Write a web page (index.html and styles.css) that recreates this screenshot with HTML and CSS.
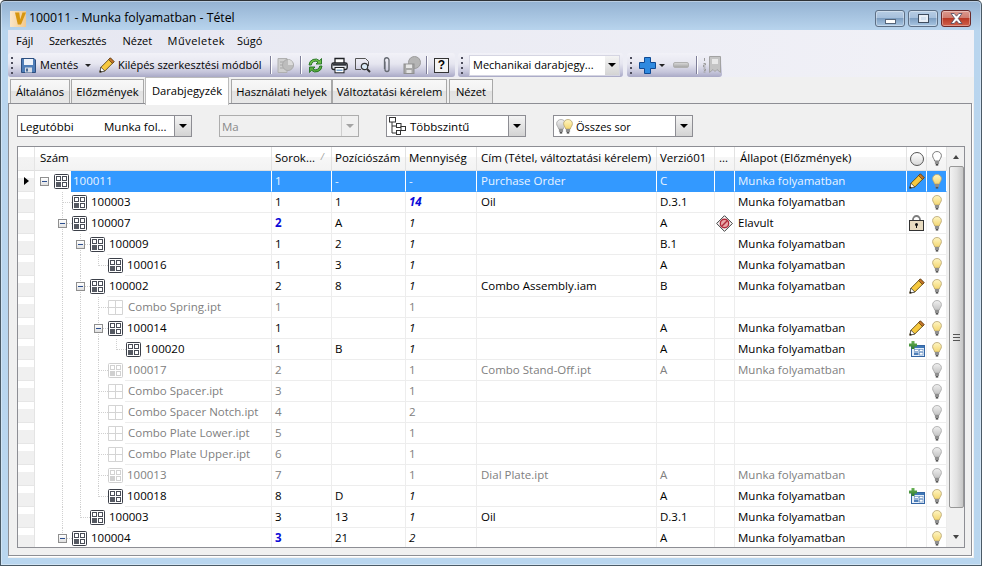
FILE: index.html
```html
<!DOCTYPE html>
<html lang="hu">
<head>
<meta charset="utf-8">
<title>100011 - Munka folyamatban - Tétel</title>
<link rel="stylesheet" href="styles.css">
</head>
<body>
<svg class="defs" width="0" height="0" aria-hidden="true">
  <defs>
    <linearGradient id="by" x1="0" y1="0" x2="0" y2="1"><stop offset="0" stop-color="#fff6c4"/><stop offset="1" stop-color="#f3d670"/></linearGradient>
    <linearGradient id="bg" x1="0" y1="0" x2="0" y2="1"><stop offset="0" stop-color="#f0f0f0"/><stop offset="1" stop-color="#c4c4c4"/></linearGradient>
    <linearGradient id="vl" x1="0" y1="0" x2="1" y2="0"><stop offset="0" stop-color="#fbe6c8"/><stop offset="1" stop-color="#f1c98e"/></linearGradient>
    <linearGradient id="gf" x1="0" y1="0" x2="0" y2="1"><stop offset="0" stop-color="#6cb558"/><stop offset="1" stop-color="#2d7a2a"/></linearGradient>
    <symbol id="asm" viewBox="0 0 15 15"><rect x=".5" y=".5" width="14" height="14" rx="1" fill="#fff" stroke="#3b3f48"/><rect x="2.500" y="2.500" width="4" height="4" fill="none" stroke="#4a4e58"/><rect x="8.500" y="2.500" width="4" height="4" fill="none" stroke="#4a4e58"/><rect x="2" y="8" width="5" height="5" fill="#555962"/><rect x="8.500" y="8.500" width="4" height="4" fill="none" stroke="#4a4e58"/></symbol>
    <symbol id="asml" viewBox="0 0 15 15"><rect x=".5" y=".5" width="14" height="14" rx="1" fill="#fff" stroke="#cfcfcf"/><rect x="2.500" y="2.500" width="4" height="4" fill="none" stroke="#d2d2d2"/><rect x="8.500" y="2.500" width="4" height="4" fill="none" stroke="#d2d2d2"/><rect x="2" y="8" width="5" height="5" fill="#d0d0d0"/><rect x="8.500" y="8.500" width="4" height="4" fill="none" stroke="#d2d2d2"/></symbol>
    <symbol id="part" viewBox="0 0 15 15"><path d="M.5.5h14v14H.5zM7.5.5v14M.5 7.5h14" fill="#fff" stroke="#d4d4d4"/></symbol>
    <symbol id="bulb" viewBox="0 0 12 18"><path d="M6 .6C3 .6.7 2.8.7 5.6c0 2.4 2 3.900 2.500 6.400h5.600c.5-2.500 2.500-4 2.500-6.400C11.300 2.800 9 .6 6 .6z" fill="url(#by)" stroke="#b8a673"/><rect x="3.500" y="12" width="5" height="3.500" fill="#8f8f8f"/><rect x="4.500" y="15.500" width="3" height="2" fill="#555"/></symbol>
    <symbol id="bulbg" viewBox="0 0 12 18"><path d="M6 .6C3 .6.7 2.8.7 5.6c0 2.4 2 3.900 2.500 6.400h5.600c.5-2.500 2.500-4 2.500-6.400C11.300 2.800 9 .6 6 .6z" fill="url(#bg)" stroke="#a8a8a8"/><rect x="3.500" y="12" width="5" height="3.500" fill="#8f8f8f"/><rect x="4.500" y="15.500" width="3" height="2" fill="#555"/></symbol>
    <symbol id="bulbo" viewBox="0 0 12 18"><path d="M6 .6C3 .6.7 2.8.7 5.6c0 2.4 2 3.900 2.500 6.400h5.600c.5-2.500 2.500-4 2.500-6.400C11.300 2.800 9 .6 6 .6z" fill="#fff" stroke="#666"/><rect x="3.500" y="12" width="5" height="3.500" fill="#8f8f8f"/><rect x="4.500" y="15.500" width="3" height="2" fill="#444"/></symbol>
    <symbol id="pencil" viewBox="0 0 16 16"><path d="M.8 15.200l1.200-5L11.200 1l3.800 3.800-9.200 9.200z" fill="#f7c93e" stroke="#5f4710" stroke-width=".9"/><path d="M9.600 2.600l3.800 3.800 1.800-1.800L11.400.8z" fill="#c5762a" stroke="#4f3310" stroke-width=".7"/><path d="M.8 15.200l1.200-5 3.800 3.800z" fill="#fff" stroke="#333" stroke-width=".7"/><path d="M.8 15.200l.5-2 1.500 1.500z" fill="#111"/></symbol>
    <symbol id="lock" viewBox="0 0 15 16"><path d="M4 7V4.500a3.500 3.500 0 0 1 7 0V7" fill="none" stroke="#7c7c7c" stroke-width="1.800"/><rect x=".5" y="5.500" width="14" height="10" fill="#e9dcc0" stroke="#333"/><circle cx="7.500" cy="9.500" r="1.500" fill="#111"/><rect x="7" y="9.500" width="1" height="3.500" fill="#111"/></symbol>
    <symbol id="stop" viewBox="0 0 17 17"><path d="M8.500.7l7.800 7.800-7.800 7.800L.7 8.500z" fill="#fff" stroke="#333"/><circle cx="8.500" cy="8.500" r="4.200" fill="#e9a8a8" stroke="#b02a3a" stroke-width="1.400"/><path d="M5.800 11.200l5.400-5.400" stroke="#b02a3a" stroke-width="1.400"/></symbol>
    <symbol id="newitem" viewBox="0 0 16 16"><rect x="2.500" y="4.500" width="13" height="11" fill="#e6effa" stroke="#3465a4"/><rect x="3" y="5" width="12" height="2" fill="#3f78b8"/><rect x="5.500" y="8.500" width="4" height="2" fill="#fff" stroke="#5a86bd" stroke-width=".6"/><rect x="10.500" y="8.500" width="3.500" height="2" fill="#fff" stroke="#5a86bd" stroke-width=".6"/><rect x="5" y="11.500" width="4.500" height="2.500" fill="#4f7fb8"/><rect x="10.500" y="11.500" width="3.500" height="2.500" fill="#fff" stroke="#5a86bd" stroke-width=".6"/><path d="M2.500 0h3v2.500H8v3H5.500V8h-3V5.500H0v-3h2.500z" fill="url(#gf)"/></symbol>
    <symbol id="save" viewBox="0 0 15 15"><path d="M.5.500h12.500l1.500 1.500v12.500H.5z" fill="#4f7eb8" stroke="#2d4f80"/><rect x="3" y="1" width="9" height="6" fill="#eef3fa"/><rect x="4" y="9.500" width="7" height="5" fill="#d7dde6"/><rect x="5" y="10.500" width="2" height="3" fill="#4a6a95"/></symbol>
    <symbol id="sync" viewBox="0 0 17 17"><path d="M2 8a6.300 6.300 0 0 1 10.600-4.300L14.500 1.500V7H9l2-2A4.200 4.200 0 0 0 4.300 8z" fill="#6fbf4a" stroke="#20701f" stroke-width=".9"/><path d="M15 9a6.300 6.300 0 0 1-10.600 4.300L2.500 15.500V10H8l-2 2a4.200 4.200 0 0 0 6.700-3z" fill="#5aad3e" stroke="#20701f" stroke-width=".9"/></symbol>
    <symbol id="print" viewBox="0 0 17 16"><path d="M4 6V1h9v5" fill="#fff" stroke="#1f2125" stroke-width="1.300"/><rect x=".8" y="5.500" width="15.400" height="6.500" rx="1.800" fill="#e3e6ec" stroke="#1f2125" stroke-width="1.300"/><rect x="1.500" y="6" width="14" height="2.200" fill="#33363c"/><rect x="4" y="10" width="9" height="5.300" fill="#fff" stroke="#1f2125"/><rect x="5.500" y="12" width="6" height="1.500" fill="#7ba6d2"/></symbol>
    <symbol id="preview" viewBox="0 0 16 16"><path d="M.5 1.500h10l3 3V9" fill="none" stroke="#555"/><path d="M.5 1.500V12.500H6" fill="none" stroke="#555"/><circle cx="9.500" cy="9.500" r="3.200" fill="#d8e8f5" stroke="#333" stroke-width="1.200"/><path d="M12 12l3 3" stroke="#333" stroke-width="2"/></symbol>
    <symbol id="clip" viewBox="0 0 8 16"><path d="M2 4.500v8a2 2 0 0 0 4 0V3a2.200 2.200 0 0 0-4.500 0v9" fill="none" stroke="#666a72" stroke-width="1.300"/></symbol>
    <symbol id="graysave" viewBox="0 0 18 18"><circle cx="11.500" cy="6.500" r="6" fill="#b5b5b5" stroke="#9c9c9c"/><rect x="1" y="8" width="10" height="9.500" fill="#a8a8a8" stroke="#8f8f8f"/><rect x="3" y="8.500" width="6" height="3.500" fill="#e8e8e8"/><rect x="3.500" y="14" width="5" height="3" fill="#e2e2e2"/></symbol>
    <symbol id="grayrep" viewBox="0 0 17 17"><path d="M1 1.500h9v14H1z" fill="#cfcfcf" stroke="#b0b0b0"/><path d="M3 5h5M3 8h5M3 11h5" stroke="#a5a5a5"/><circle cx="11" cy="8" r="5.500" fill="#bdbdbd" stroke="#aaa"/><path d="M11 8V2.500A5.500 5.500 0 0 1 16 8z" fill="#dcdcdc"/></symbol>
    <symbol id="plus" viewBox="0 0 17 17"><path d="M5.500.5h6v5h5v6h-5v5h-6v-5h-5v-6h5z" fill="#2f8ae0" stroke="#0f4a94"/></symbol>
    <symbol id="stack" viewBox="0 0 18 18"><path d="M6.500.5h11v16l-3.500-3-2 2-2-2-3.500 3z" fill="#c4c4c4" stroke="#a2a2a2"/><path d="M9 3h6v5H9z" fill="#e8e8e8"/><path d="M1.500 2v3M.5 7.500h2v1.500H.5v2h2M.5 13h2v1.500H1M.5 16h2" stroke="#9c9c9c" fill="none"/></symbol>
    <symbol id="multi" viewBox="0 0 17 18"><path d="M3 5v11h4M3 9h4" fill="none" stroke="#333"/><rect x=".5" y=".5" width="6" height="4.500" fill="#fff" stroke="#333"/><rect x="7.500" y="6.500" width="4.500" height="4" fill="#fff" stroke="#333"/><rect x="7.500" y="13.500" width="4" height="4" fill="#fff" stroke="#333"/><rect x="12" y="9.500" width="4.500" height="4" fill="#fff" stroke="#333"/></symbol>
    <symbol id="logo" viewBox="0 0 16 16"><rect width="16" height="16" fill="url(#vl)"/><path d="M5 1.500h4.200l1 7 2.300-7H16l-5 12H7.800z" fill="#d6960f"/></symbol>
  </defs>
</svg>

<div class="window">
  <header class="titlebar">
    <svg class="logo"><use href="#logo"/></svg>
    <span class="title">100011 - Munka folyamatban - Tétel</span>
    <div class="winbtns">
      <button class="wb"><span class="wb-min"></span></button>
      <button class="wb"><span class="wb-max"></span></button>
      <button class="wb wb-close"><svg width="13" height="11" viewBox="0 0 13 11"><path d="M1 .5h3.200l2.300 2.700L8.800.5H12L8.300 5.500 12 10.500H8.800L6.500 7.800 4.200 10.500H1l3.700-5z" fill="#fff" stroke="#4a4a60" stroke-width=".8"/></svg></button>
    </div>
  </header>

  <main class="client">
    <div class="bars">
      <nav class="menu">
        <span class="mi m1">Fájl</span><span class="mi m2">Szerkesztés</span><span class="mi m3">Nézet</span><span class="mi m4">Műveletek</span><span class="mi m5">Súgó</span>
      </nav>
      <div class="toolrow">
        <div class="strip s1">
          <i class="grip"></i>
          <svg class="ic15 i-save"><use href="#save"/></svg>
          <span class="tl l-ment">Mentés</span>
          <i class="caret c-ment"></i>
          <svg class="ic16 i-pen"><use href="#pencil"/></svg>
          <span class="tl l-kil">Kilépés szerkesztési módból</span>
          <i class="sep sp1"></i>
          <svg class="ic17 i-rep"><use href="#grayrep"/></svg>
          <i class="sep sp2"></i>
          <svg class="ic17 i-sync"><use href="#sync"/></svg>
          <svg class="ic17 i-print"><use href="#print"/></svg>
          <svg class="ic16 i-prev"><use href="#preview"/></svg>
          <svg class="clip"><use href="#clip"/></svg>
          <svg class="ic18 i-gs"><use href="#graysave"/></svg>
          <i class="sep sp3"></i>
          <span class="help">?</span>
        </div>
        <div class="strip s2">
          <i class="grip"></i>
          <div class="tcombo"><span class="tc-text">Mechanikai darabjegy...</span><span class="tc-btn"><i class="arrow"></i></span></div>
        </div>
        <div class="strip s3">
          <i class="grip"></i>
          <svg class="ic17 i-plus"><use href="#plus"/></svg>
          <i class="caret c-plus"></i>
          <i class="minus"></i>
          <i class="sep sp4"></i>
          <svg class="ic18 i-stack"><use href="#stack"/></svg>
        </div>
      </div>
    </div>

    <div class="tabs">
      <span class="tab t1">Általános</span>
      <span class="tab t2">Előzmények</span>
      <span class="tab active t3">Darabjegyzék</span>
      <span class="tab t4">Használati helyek</span>
      <span class="tab t5">Változtatási kérelem</span>
      <span class="tab t6">Nézet</span>
    </div>

    <section class="panel">
      <div class="filters">
        <div class="combo cb1"><span class="c-a">Legutóbbi</span><span class="c-b">Munka fol...</span><span class="cbtn"><i class="arrow"></i></span></div>
        <div class="combo cb2 off"><span class="c-t">Ma</span><span class="cbtn"><i class="arrow"></i></span></div>
        <div class="combo cb3"><svg class="cico"><use href="#multi"/></svg><span class="c-t2">Többszintű</span><span class="cbtn"><i class="arrow"></i></span></div>
        <div class="combo cb4"><svg class="cbulb cb-g"><use href="#bulbg"/></svg><svg class="cbulb cb-y"><use href="#bulb"/></svg><span class="c-t2 c-t4">Összes sor</span><span class="cbtn"><i class="arrow"></i></span></div>
      </div>

      <div class="grid">
        <div class="table">
          <div class="row head">
            <div class="rh"></div>
            <div class="h h-tree">Szám</div>
            <div class="h h-sort">Sorok...<em class="sorted">/</em></div>
            <div class="h">Pozíciószám</div>
            <div class="h">Mennyiség</div>
            <div class="h h-cim">Cím (Tétel, változtatási kérelem)</div>
            <div class="h">Verzió01</div>
            <div class="h h-dots">...</div>
            <div class="h h-all">Állapot (Előzmények)</div>
            <div class="h h-ic"><i class="circ"></i></div>
            <div class="h h-ic"><svg class="bulb"><use href="#bulbo"/></svg></div>
          </div>

          <div class="row sel">
            <div class="rh"><i class="cur"></i></div>
            <div class="tree"><span class="slot"><i class="exp"></i></span><svg class="node"><use href="#asm"/></svg><span class="name">100011</span></div>
            <div class="c">1</div><div class="c">-</div><div class="c">-</div><div class="c cim">Purchase Order</div><div class="c">C</div><div class="c"></div><div class="c">Munka folyamatban</div>
            <div class="c ic"><svg class="pen"><use href="#pencil"/></svg></div><div class="c ic"><svg class="bulb"><use href="#bulb"/></svg></div>
          </div>

          <div class="row">
            <div class="rh"></div>
            <div class="tree"><i class="g"></i><span class="slot tee"></span><svg class="node"><use href="#asm"/></svg><span class="name">100003</span></div>
            <div class="c">1</div><div class="c">1</div><div class="c qty">14</div><div class="c cim">Oil</div><div class="c">D.3.1</div><div class="c"></div><div class="c">Munka folyamatban</div>
            <div class="c ic"></div><div class="c ic"><svg class="bulb"><use href="#bulb"/></svg></div>
          </div>

          <div class="row">
            <div class="rh"></div>
            <div class="tree"><i class="g"></i><span class="slot tee"><i class="exp"></i></span><svg class="node"><use href="#asm"/></svg><span class="name">100007</span></div>
            <div class="c blue">2</div><div class="c">A</div><div class="c it">1</div><div class="c cim"></div><div class="c">A</div><div class="c ic"><svg class="stop"><use href="#stop"/></svg></div><div class="c">Elavult</div>
            <div class="c ic"><svg class="lock"><use href="#lock"/></svg></div><div class="c ic"><svg class="bulb"><use href="#bulb"/></svg></div>
          </div>

          <div class="row">
            <div class="rh"></div>
            <div class="tree"><i class="g"></i><i class="g v"></i><span class="slot tee"><i class="exp"></i></span><svg class="node"><use href="#asm"/></svg><span class="name">100009</span></div>
            <div class="c">1</div><div class="c">2</div><div class="c it">1</div><div class="c cim"></div><div class="c">B.1</div><div class="c"></div><div class="c">Munka folyamatban</div>
            <div class="c ic"></div><div class="c ic"><svg class="bulb"><use href="#bulb"/></svg></div>
          </div>

          <div class="row">
            <div class="rh"></div>
            <div class="tree"><i class="g"></i><i class="g v"></i><i class="g v"></i><span class="slot last"></span><svg class="node"><use href="#asm"/></svg><span class="name">100016</span></div>
            <div class="c">1</div><div class="c">3</div><div class="c it">1</div><div class="c cim"></div><div class="c">A</div><div class="c"></div><div class="c">Munka folyamatban</div>
            <div class="c ic"></div><div class="c ic"><svg class="bulb"><use href="#bulb"/></svg></div>
          </div>

          <div class="row">
            <div class="rh"></div>
            <div class="tree"><i class="g"></i><i class="g v"></i><span class="slot tee"><i class="exp"></i></span><svg class="node"><use href="#asm"/></svg><span class="name">100002</span></div>
            <div class="c">2</div><div class="c">8</div><div class="c it">1</div><div class="c cim">Combo Assembly.iam</div><div class="c">B</div><div class="c"></div><div class="c">Munka folyamatban</div>
            <div class="c ic"><svg class="pen"><use href="#pencil"/></svg></div><div class="c ic"><svg class="bulb"><use href="#bulb"/></svg></div>
          </div>

          <div class="row dim">
            <div class="rh"></div>
            <div class="tree"><i class="g"></i><i class="g v"></i><i class="g v"></i><span class="slot tee"></span><svg class="node"><use href="#part"/></svg><span class="name pt">Combo Spring.ipt</span></div>
            <div class="c">1</div><div class="c"></div><div class="c">1</div><div class="c cim"></div><div class="c"></div><div class="c"></div><div class="c"></div>
            <div class="c ic"></div><div class="c ic"><svg class="bulb"><use href="#bulbg"/></svg></div>
          </div>

          <div class="row">
            <div class="rh"></div>
            <div class="tree"><i class="g"></i><i class="g v"></i><i class="g v"></i><span class="slot tee"><i class="exp"></i></span><svg class="node"><use href="#asm"/></svg><span class="name">100014</span></div>
            <div class="c">1</div><div class="c"></div><div class="c it">1</div><div class="c cim"></div><div class="c">A</div><div class="c"></div><div class="c">Munka folyamatban</div>
            <div class="c ic"><svg class="pen"><use href="#pencil"/></svg></div><div class="c ic"><svg class="bulb"><use href="#bulb"/></svg></div>
          </div>

          <div class="row">
            <div class="rh"></div>
            <div class="tree"><i class="g"></i><i class="g v"></i><i class="g v"></i><i class="g v"></i><span class="slot last"></span><svg class="node"><use href="#asm"/></svg><span class="name">100020</span></div>
            <div class="c">1</div><div class="c">B</div><div class="c it">1</div><div class="c cim"></div><div class="c">A</div><div class="c"></div><div class="c">Munka folyamatban</div>
            <div class="c ic"><svg class="new"><use href="#newitem"/></svg></div><div class="c ic"><svg class="bulb"><use href="#bulb"/></svg></div>
          </div>

          <div class="row dim">
            <div class="rh"></div>
            <div class="tree"><i class="g"></i><i class="g v"></i><i class="g v"></i><span class="slot tee"></span><svg class="node"><use href="#asml"/></svg><span class="name">100017</span></div>
            <div class="c">2</div><div class="c"></div><div class="c">1</div><div class="c cim">Combo Stand-Off.ipt</div><div class="c">A</div><div class="c"></div><div class="c">Munka folyamatban</div>
            <div class="c ic"></div><div class="c ic"><svg class="bulb"><use href="#bulbg"/></svg></div>
          </div>

          <div class="row dim">
            <div class="rh"></div>
            <div class="tree"><i class="g"></i><i class="g v"></i><i class="g v"></i><span class="slot tee"></span><svg class="node"><use href="#part"/></svg><span class="name pt">Combo Spacer.ipt</span></div>
            <div class="c">3</div><div class="c"></div><div class="c">1</div><div class="c cim"></div><div class="c"></div><div class="c"></div><div class="c"></div>
            <div class="c ic"></div><div class="c ic"><svg class="bulb"><use href="#bulbg"/></svg></div>
          </div>

          <div class="row dim">
            <div class="rh"></div>
            <div class="tree"><i class="g"></i><i class="g v"></i><i class="g v"></i><span class="slot tee"></span><svg class="node"><use href="#part"/></svg><span class="name pt">Combo Spacer Notch.ipt</span></div>
            <div class="c">4</div><div class="c"></div><div class="c">2</div><div class="c cim"></div><div class="c"></div><div class="c"></div><div class="c"></div>
            <div class="c ic"></div><div class="c ic"><svg class="bulb"><use href="#bulbg"/></svg></div>
          </div>

          <div class="row dim">
            <div class="rh"></div>
            <div class="tree"><i class="g"></i><i class="g v"></i><i class="g v"></i><span class="slot tee"></span><svg class="node"><use href="#part"/></svg><span class="name pt">Combo Plate Lower.ipt</span></div>
            <div class="c">5</div><div class="c"></div><div class="c">1</div><div class="c cim"></div><div class="c"></div><div class="c"></div><div class="c"></div>
            <div class="c ic"></div><div class="c ic"><svg class="bulb"><use href="#bulbg"/></svg></div>
          </div>

          <div class="row dim">
            <div class="rh"></div>
            <div class="tree"><i class="g"></i><i class="g v"></i><i class="g v"></i><span class="slot tee"></span><svg class="node"><use href="#part"/></svg><span class="name pt">Combo Plate Upper.ipt</span></div>
            <div class="c">6</div><div class="c"></div><div class="c">1</div><div class="c cim"></div><div class="c"></div><div class="c"></div><div class="c"></div>
            <div class="c ic"></div><div class="c ic"><svg class="bulb"><use href="#bulbg"/></svg></div>
          </div>

          <div class="row dim">
            <div class="rh"></div>
            <div class="tree"><i class="g"></i><i class="g v"></i><i class="g v"></i><span class="slot tee"></span><svg class="node"><use href="#asml"/></svg><span class="name">100013</span></div>
            <div class="c">7</div><div class="c"></div><div class="c">1</div><div class="c cim">Dial Plate.ipt</div><div class="c">A</div><div class="c"></div><div class="c">Munka folyamatban</div>
            <div class="c ic"></div><div class="c ic"><svg class="bulb"><use href="#bulbg"/></svg></div>
          </div>

          <div class="row">
            <div class="rh"></div>
            <div class="tree"><i class="g"></i><i class="g v"></i><i class="g v"></i><span class="slot last"></span><svg class="node"><use href="#asm"/></svg><span class="name">100018</span></div>
            <div class="c">8</div><div class="c">D</div><div class="c it">1</div><div class="c cim"></div><div class="c">A</div><div class="c"></div><div class="c">Munka folyamatban</div>
            <div class="c ic"><svg class="new"><use href="#newitem"/></svg></div><div class="c ic"><svg class="bulb"><use href="#bulb"/></svg></div>
          </div>

          <div class="row">
            <div class="rh"></div>
            <div class="tree"><i class="g"></i><i class="g v"></i><span class="slot last"></span><svg class="node"><use href="#asm"/></svg><span class="name">100003</span></div>
            <div class="c">3</div><div class="c">13</div><div class="c it">1</div><div class="c cim">Oil</div><div class="c">D.3.1</div><div class="c"></div><div class="c">Munka folyamatban</div>
            <div class="c ic"></div><div class="c ic"><svg class="bulb"><use href="#bulb"/></svg></div>
          </div>

          <div class="row">
            <div class="rh"></div>
            <div class="tree"><i class="g"></i><span class="slot last"><i class="exp"></i></span><svg class="node"><use href="#asm"/></svg><span class="name">100004</span></div>
            <div class="c blue">3</div><div class="c">21</div><div class="c it">2</div><div class="c cim"></div><div class="c">A</div><div class="c"></div><div class="c">Munka folyamatban</div>
            <div class="c ic"></div><div class="c ic"><svg class="bulb"><use href="#bulb"/></svg></div>
          </div>
        </div>

        <div class="scroll">
          <span class="sb-btn"><i class="up"></i></span>
          <div class="thumb"><i class="gripper"></i></div>
          <span class="sb-btn sb-down"><i class="down"></i></span>
        </div>
      </div>
    </section>
  </main>
</div>
</body>
</html>
```

FILE: styles.css
```css
* { box-sizing: border-box; }
html, body { margin: 0; padding: 0; }
body {
  width: 982px; height: 566px; overflow: hidden; background: #fff;
  font-family: "Open Sans", "Noto Sans", sans-serif; font-size: 11.5px; color: #000;
}
.defs { position: absolute; }
i { display: block; font-style: normal; }

.window {
  width: 982px; height: 566px; display: flex; flex-direction: column;
  border: 1px solid #4a5a66; border-top-color: #2e3236; border-radius: 5px 5px 0 0;
  background: linear-gradient(#94b2d2 0, #b9d5ee 30px, #b9d6ef 100%);
  box-shadow: inset 0 0 0 1px rgba(255,255,255,.35);
}

/* title */
.titlebar { height: 29px; flex: none; display: flex; align-items: flex-start; }
.logo { width: 16px; height: 16px; margin: 10px 0 0 9px; flex: none; }
.title { margin: 8px 0 0 3px; font-size: 12.3px; line-height: 17px; }
.winbtns { margin: 9px 0 0 auto; padding-right: 10px; display: flex; gap: 3px; }
.wb {
  width: 30px; height: 17px; padding: 0; border: 1px solid #5d6f85; border-radius: 3px;
  background: linear-gradient(#b7cde4 0, #a6c0dc 45%, #7e9fc2 50%, #a9c6e2 100%);
  display: flex; align-items: center; justify-content: center;
  box-shadow: inset 0 0 0 1px rgba(255,255,255,.35);
}
.wb-min { width: 11px; height: 5px; margin-top: 5px; background: #fff; border: 1px solid #55657a; }
.wb-max { width: 11px; height: 9px; background: #d3e0ee; border: 1px solid #3e4c5e; box-shadow: inset 0 0 0 2px #e9eff6; }
.wb-close { background: linear-gradient(#dd9a8e 0, #cf7d70 45%, #b93a26 50%, #d0614c 100%); border-color: #6b2a2a; }

/* client */
.client { margin: 0 7px; height: 528px; flex: none; background: #f0f0f0; display: flex; flex-direction: column; }
.bars { height: 47px; flex: none; background: linear-gradient(90deg, #e6e7f1, #f1f1f7); }
.menu { height: 23px; display: flex; align-items: center; font-size: 11px; }
.mi { line-height: 21px; margin-top: -2px; flex: none; }
.m1 { margin-left: 8px; width: 33px; }
.m2 { width: 73.500px; letter-spacing: -.2px; }
.m3 { width: 45px; }
.m4 { width: 69.500px; letter-spacing: .5px; }

.toolrow { height: 24px; display: flex; font-size: 11px; }
.strip {
  height: 24px; display: flex; align-items: center; flex: none;
  background: linear-gradient(#f2f2f8 0, #e6e6f0 45%, #c4c4da 80%, #a9a9c6 100%);
  border-radius: 3px;
}
.s1 { width: 447px; }
.s2 { width: 165px; margin-left: 3px; }
.s3 { width: 95px; margin-left: 4px; }
.grip {
  width: 2px; height: 17px; margin-left: 3px; flex: none;
  background: repeating-linear-gradient(#4e4e5e 0, #4e4e5e 2px, transparent 2px, transparent 5px);
}
.caret { width: 0; height: 0; border: 3px solid transparent; border-top: 3px solid #222; border-bottom: 0; flex: none; }
.sep { width: 1px; height: 18px; background: #7e7e98; box-shadow: 1px 0 0 #fff; flex: none; }
.ic15 { width: 15px; height: 15px; flex: none; }
.ic16 { width: 16px; height: 16px; flex: none; }
.ic17 { width: 17px; height: 17px; flex: none; }
.ic18 { width: 18px; height: 18px; flex: none; }
.tl { white-space: nowrap; flex: none; margin-top: -2px; }
.i-save { margin-left: 8px; }
.l-ment { margin-left: 4px; width: 45px; }
.i-pen { margin-left: 8px; }
.l-kil { margin-left: 3px; width: 148px; }
.sp1 { margin-left: 4px; }
.i-rep { margin-left: 6px; }
.sp2 { margin-left: 6px; }
.i-sync { margin-left: 6px; }
.i-print { margin-left: 7px; }
.i-prev { margin-left: 7px; }
.clip { width: 8px; height: 16px; margin-left: 12px; flex: none; }
.i-gs { margin-left: 12px; }
.sp3 { margin-left: 5px; }
.help {
  width: 15px; height: 15px; margin-left: 7px; flex: none; border: 1px solid #333; background: #f3f3f3;
  font: bold 12px/13px "Liberation Sans", sans-serif; text-align: center;
}
.tcombo {
  width: 151px; height: 21px; margin-left: 6px; flex: none; display: flex; background: #fff;
  border: 1px solid #d5d5e2;
}
.tc-text { flex: 1; padding-left: 3px; line-height: 18px; white-space: nowrap; overflow: hidden; }
.tc-btn { width: 14px; display: flex; align-items: center; justify-content: center; background: linear-gradient(#f4f4f4, #d4d4d4); }
.arrow { width: 0; height: 0; border: 4px solid transparent; border-top: 4px solid #000; border-bottom: 0; }
.i-plus { margin-left: 7px; }
.c-plus { margin-left: 3px; }
.minus { width: 16px; height: 6px; margin-left: 8px; border-radius: 2px; background: linear-gradient(#d6d6d6, #a8a8a8); border: 1px solid #b0b0b0; flex: none; }
.sp4 { margin-left: 7px; }
.i-stack { margin-left: 6px; }

/* tabs */
.tabs { height: 26px; flex: none; display: flex; align-items: flex-end; padding-left: 2px; position: relative; font-size: 11.2px; }
.tab {
  height: 24px; margin-right: 1px; border: 1px solid #a8a8a8; border-bottom: 0; text-align: center;
  line-height: 23px; background: linear-gradient(#f8f8f8 0, #f2f2f2 45%, #e2e2e2 50%, #e8e8e8 100%); white-space: nowrap;
}
.t1 { width: 60px; } .t2 { width: 73px; }
.t3 { width: 84px; margin-right: 2px; } .t4 { width: 101px; margin-right: 0; } .t5 { width: 115px; margin-right: 2px; } .t6 { width: 44px; }
.tab.active {
  height: 28px; margin-bottom: -2px; line-height: 25px; background: #fff; border-color: #bbb;
  position: relative; z-index: 2; padding-bottom: 2px;
}

/* panel */
.panel { height: 453px; flex: none; margin-right: 2px; border: 1px solid #8d8e94; padding: 11px 6px 7px 8px; background: #f0f0f0; box-shadow: 1px 1px 0 #fff; }
.filters { height: 22px; display: flex; }
.combo { width: 140px; height: 22px; flex: none; border: 1px solid #8d8d93; background: #fff; display: flex; align-items: center; }
.cb1 { width: 175px; }
.cb2, .cb3, .cb4 { margin-left: 27px; }
.combo.off { background: #f0f0f0; border-color: #adadad; color: #8a8a8a; }
.cbtn { margin-left: auto; width: 17px; height: 20px; flex: none; border-left: 1px solid #8d8d93; background: linear-gradient(#f4f4f4, #d3d3d3); display: flex; align-items: center; justify-content: center; }
.off .cbtn { background: #f0f0f0; border-color: #cfcfcf; }
.off .arrow { border-top-color: #a4a4a4; }
.c-a { margin-left: 2px; width: 84px; }
.c-b { white-space: nowrap; }
.c-t { margin-left: 2px; }
.cico { width: 17px; height: 18px; margin-left: 2px; flex: none; }
.c-t2 { margin-left: 4px; }
.cbulb { width: 10px; height: 15px; flex: none; }
.cb-g { margin-left: 2px; }
.cb-y { margin-left: -3px; }
.c-t4 { margin-left: 3px; font-size: 11px; }

/* grid */
.grid { height: 402px; margin-top: 9px; border: 1px solid #8d8e94; display: flex; background: #fff; overflow: hidden; }
.table { width: 929px; flex: none; }
.row {
  display: grid; height: 21px;
  grid-template-columns: 17px 237px 60px 74px 71px 180px 58px 20px 172px 20px 20px;
}
.rh {
  border-right: 1px solid #e4e4e4; border-bottom: 1px solid #e6e6e6;
  background: linear-gradient(#fff 0, #fff 35%, #f0f0f0 35%, #f0f0f0 100%);
  display: flex; align-items: center; justify-content: center;
}
.cur { width: 0; height: 0; border: 4px solid transparent; border-left: 5px solid #000; border-right: 0; }
.row.head { height: 24px; }
.head .rh { border-bottom: 1px solid #e0e0e0; background: linear-gradient(#fff 0, #fff 45%, #f3f3f3 45%, #f1f1f1 100%); }
.h {
  border-right: 1px solid #e2e2e2; border-bottom: 1px solid #e0e0e0; padding-left: 3px; line-height: 22px; white-space: nowrap;
  background: linear-gradient(#fff 0, #fff 45%, #f7f7f7 45%, #f3f3f3 100%); overflow: hidden; position: relative;
}
.h-tree { padding-left: 5px; }
.h-dots { padding-left: 4px; }
.h-cim { padding-left: 4px; }
.h-all { padding-left: 5px; }
.sorted { position: absolute; right: 7px; top: -1px; font-size: 9px; color: #999; }
.h-ic, .ic { padding: 0; display: flex; align-items: center; justify-content: center; }
.circ { width: 14px; height: 14px; border-radius: 50%; border: 1px solid #555; background: linear-gradient(#fff, #d8d8d8); }

.c {
  border-right: 1px solid #ededed; border-bottom: 1px solid #ededed; padding-left: 3px; line-height: 20px;
  white-space: nowrap; overflow: hidden;
}
.c.cim { padding-left: 4px; }
.c.ic { padding: 0; }
.it { font-style: italic; }
.qty { font-style: italic; font-weight: 700; color: #0a0ad8; }
.blue { font-weight: 700; color: #0a0ad8; }
.dim .c, .dim .name { color: #808080; }
.tree { display: flex; align-items: stretch; height: 21px; }
.g { width: 18px; flex: none; position: relative; }
.g.v::before, .tee::before, .last::before {
  content: ""; position: absolute; left: 9px; top: 0; bottom: 0; border-left: 1px dotted #d0d0d0;
}
.last::before { bottom: 10px; }
.slot { width: 19px; flex: none; position: relative; }
.tee::after, .last::after {
  content: ""; position: absolute; left: 10px; top: 10px; width: 9px; border-top: 1px dotted #d0d0d0;
}
.exp {
  position: absolute; left: 5px; top: 6px; width: 9px; height: 9px; z-index: 1; border: 1px solid #8f8f8f;
  background: linear-gradient(#fff, #e0e0e0);
}
.exp::after { content: ""; position: absolute; left: 1px; top: 3px; width: 5px; height: 1px; background: #2c4f8f; }
.node { width: 15px; height: 15px; flex: none; margin: 3px 2px 0 0; }
.name {
  flex: 1; min-width: 0; padding-left: 2px; line-height: 20px; white-space: nowrap;
  border-right: 1px solid #ededed; border-bottom: 1px solid #ededed;
}
.name.pt { padding-left: 3px; }
.bulb { width: 10px; height: 15px; }
.pen { width: 16px; height: 16px; }
.lock { width: 15px; height: 16px; }
.stop { width: 17px; height: 17px; }
.new { width: 16px; height: 16px; }

.sel .name, .sel .c { background: #3399ff; color: #eaf4ff; border-right-color: #fff; border-bottom-color: #3399ff; }

/* scrollbar */
.scroll { width: 18px; flex: none; background: #f0f0f0; display: flex; flex-direction: column; align-items: center; }
.sb-btn { height: 19px; width: 18px; flex: none; display: flex; align-items: center; justify-content: center; background: #f0f0f0; }
.sb-down { margin-top: auto; height: 20px; }
.up { width: 0; height: 0; border: 3.5px solid transparent; border-bottom: 4px solid #444; border-top: 0; }
.down { width: 0; height: 0; border: 3.5px solid transparent; border-top: 4px solid #444; border-bottom: 0; }
.thumb {
  width: 15px; height: 342px; flex: none; border: 1px solid #979797; border-radius: 2px;
  background: linear-gradient(90deg, #f2f2f2, #e2e2e2 50%, #c6c6c6);
  display: flex; align-items: center; justify-content: center;
}
.gripper { width: 7px; height: 7px; background: repeating-linear-gradient(#555 0, #555 1px, transparent 1px, transparent 3px); }
```
